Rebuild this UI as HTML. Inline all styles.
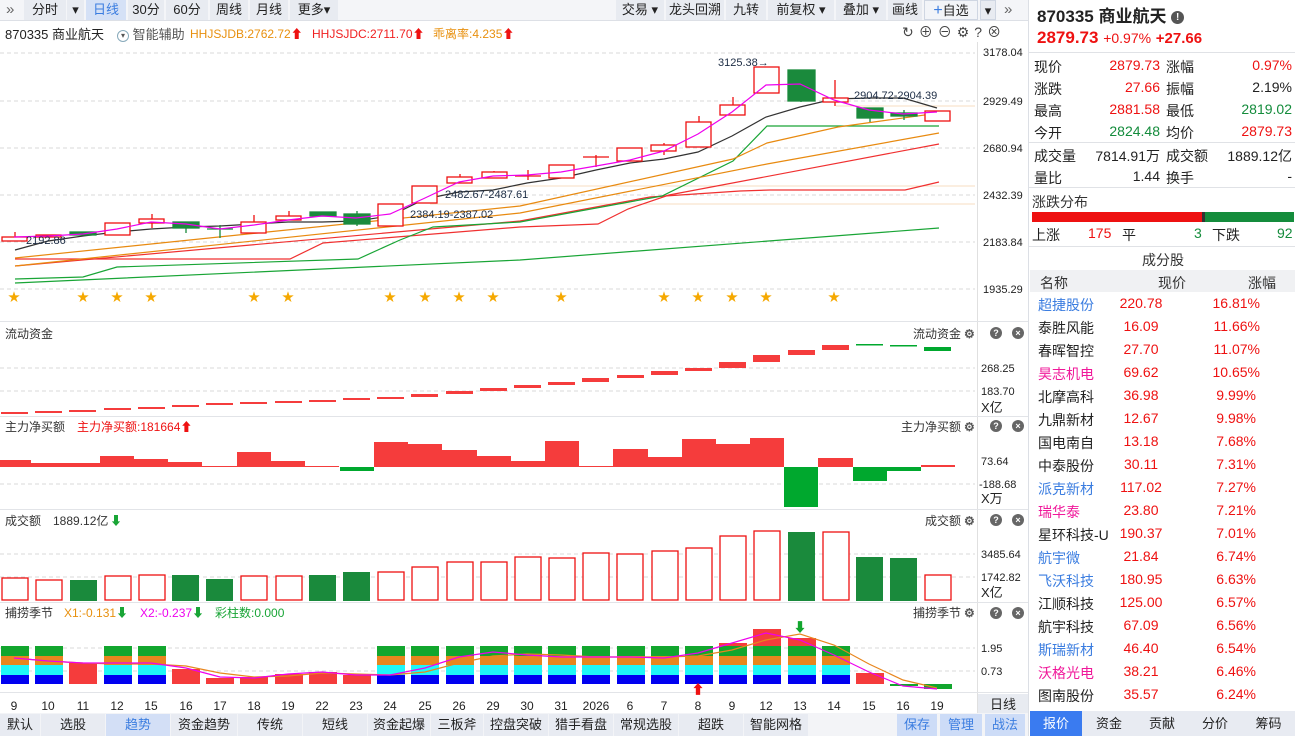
<!DOCTYPE html>
<html><head><meta charset="utf-8">
<style>
*{margin:0;padding:0;box-sizing:border-box}
body{width:1295px;height:736px;overflow:hidden;background:#fff;font-family:"Liberation Sans","Noto Sans CJK SC",sans-serif;font-size:13px;color:#222;position:relative}
.a{position:absolute;white-space:nowrap}
.tb{position:absolute;top:0;height:20px;background:#e8ebf1;line-height:20px;font-size:13px;text-align:center;color:#222}
.bt{position:absolute;top:714px;height:22px;background:#e8ebf2;line-height:22px;font-size:13px;text-align:center;color:#222}
.r{color:#ee1111}.g{color:#148c3c}
</style></head><body>
<div class="a" style="left:0;top:0;width:1028px;height:21px;background:#f4f5f8;border-bottom:1px solid #dde0e6"></div>
<div class="a" style="left:6px;top:1px;font-size:15px;color:#666">»</div>
<div class="tb" style="left:24px;width:42px">分时</div>
<div class="tb" style="left:67px;width:17px">▾</div>
<div class="tb" style="left:86px;width:40px;background:#d5e1f6;color:#3b7de0">日线</div>
<div class="tb" style="left:128px;width:36px">30分</div>
<div class="tb" style="left:166px;width:42px">60分</div>
<div class="tb" style="left:210px;width:38px">周线</div>
<div class="tb" style="left:250px;width:38px">月线</div>
<div class="tb" style="left:290px;width:48px">更多▾</div>
<div class="tb" style="left:616px;width:48px">交易 ▾</div>
<div class="tb" style="left:666px;width:58px">龙头回溯</div>
<div class="tb" style="left:726px;width:40px">九转</div>
<div class="tb" style="left:768px;width:66px">前复权 ▾</div>
<div class="tb" style="left:836px;width:50px">叠加 ▾</div>
<div class="tb" style="left:888px;width:34px">画线</div>
<div class="tb" style="left:924px;width:54px;background:#f2f4f8;border:1px solid #cfd6e2"><span style="color:#3b7de0;font-size:16px">+</span>自选</div>
<div class="tb" style="left:980px;width:16px;border:1px solid #cfd6e2">▾</div>
<div class="a" style="left:1004px;top:1px;font-size:15px;color:#666">»</div>

<div class="a" style="left:5px;top:24px;font-size:13px">870335 商业航天</div>
<div class="a" style="left:117px;top:24px;font-size:13px;color:#555"><span style="display:inline-block;width:12px;height:12px;border:1px solid #8ab;border-radius:50%;font-size:8px;line-height:10px;text-align:center;vertical-align:1px">▾</span> 智能辅助</div>
<div class="a" style="left:190px;top:25px;font-size:12px;color:#e8900e">HHJSJDB:2762.72<span class="r">⬆</span></div>
<div class="a" style="left:312px;top:25px;font-size:12px;color:#f02020">HHJSJDC:2711.70<span class="r">⬆</span></div>
<div class="a" style="left:433px;top:25px;font-size:12px;color:#e8900e">乖离率:4.235<span class="r">⬆</span></div>
<div class="a" style="left:902px;top:22px;font-size:14px;color:#444;letter-spacing:5px">↻⊕⊖⚙?⊗</div>

<svg class="a" style="left:0;top:0" width="1028" height="714" viewBox="0 0 1028 714" font-family="Liberation Sans, Noto Sans CJK SC, sans-serif">
<g stroke="#d8d8d8" stroke-dasharray="4,3" stroke-width="1">
<line x1="0" y1="53" x2="975" y2="53"/><line x1="0" y1="101" x2="975" y2="101"/><line x1="0" y1="148" x2="975" y2="148"/><line x1="0" y1="195" x2="975" y2="195"/><line x1="0" y1="242" x2="975" y2="242"/><line x1="0" y1="289" x2="975" y2="289"/>
<line x1="0" y1="368" x2="975" y2="368"/><line x1="0" y1="391" x2="975" y2="391"/>
<line x1="0" y1="484" x2="975" y2="484"/>
<line x1="0" y1="554" x2="975" y2="554"/><line x1="0" y1="577" x2="975" y2="577"/>
<line x1="0" y1="648" x2="975" y2="648"/><line x1="0" y1="671" x2="975" y2="671"/>
</g>
<line x1="977.5" y1="42" x2="977.5" y2="713" stroke="#e0e0e0"/>
<g stroke="#e2e4e8"><line x1="0" y1="321.5" x2="1028" y2="321.5"/><line x1="0" y1="416.5" x2="1028" y2="416.5"/><line x1="0" y1="509.5" x2="1028" y2="509.5"/><line x1="0" y1="602.5" x2="1028" y2="602.5"/><line x1="0" y1="692.5" x2="1028" y2="692.5"/></g>
<g stroke="#f7dcc0"><line x1="836" y1="106" x2="975" y2="106"/><line x1="430" y1="186" x2="975" y2="186"/><line x1="430" y1="204" x2="975" y2="204"/></g>
<g font-size="11" fill="#222">
<text x="983" y="56">3178.04</text><text x="983" y="105">2929.49</text><text x="983" y="152">2680.94</text><text x="983" y="199">2432.39</text><text x="983" y="246">2183.84</text><text x="983" y="293">1935.29</text>
<text x="981" y="372">268.25</text><text x="981" y="395">183.70</text><text x="981" y="412" font-size="13">X亿</text>
<text x="981" y="465">73.64</text><text x="979" y="488">-188.68</text><text x="981" y="503" font-size="13">X万</text>
<text x="981" y="558">3485.64</text><text x="981" y="581">1742.82</text><text x="981" y="597" font-size="13">X亿</text>
<text x="981" y="652">1.95</text><text x="981" y="675">0.73</text>
</g>
<g fill="none" stroke-width="1.2">
<polyline stroke="#19a536" points="15,283 520,260 939,228"/>
<polyline stroke="#f03030" points="15,259 290,259 323,243 520,227 598,224 628,209 669,195 939,144"/>
<polyline stroke="#f03030" points="15,266 520,221 650,197 740,191 770,190 905,190 939,182"/>
<polyline stroke="#19a536" points="15,279 83,277 117,267 358,259 400,240 433,227 520,222 662,196 733,161 767,126 939,126"/>
<polyline stroke="#e88a10" points="15,266 520,213 767,164 939,133"/>
<polyline stroke="#e88a10" points="15,258 520,206 733,159 767,143 838,127 939,113"/>
<polyline stroke="#333" points="15,250 48,241 83,236 117,232 151,229 186,227 220,226 254,224 288,222 322,222 356,221 390,216 425,199 459,192 493,190 527,183 561,178 596,170 630,163 664,159 698,152 732,136 766,117 800,107 834,99 869,98 903,98 937,108"/>
</g>
<g stroke="#ee1111" stroke-width="1.3" fill="#fff">
<line x1="15" y1="232" x2="15" y2="237"/><rect x="2" y="237" width="25" height="4"/>
<rect x="36" y="235" width="25" height="2"/>
<rect x="105" y="223" width="25" height="12"/>
<line x1="152" y1="214" x2="152" y2="228"/><rect x="139" y="219" width="25" height="4"/>
<line x1="254" y1="215" x2="254" y2="222"/><rect x="241" y="222" width="25" height="11"/>
<line x1="289" y1="211" x2="289" y2="216"/><rect x="276" y="216" width="25" height="4"/>
<rect x="378" y="204" width="25" height="22"/>
<rect x="412" y="186" width="25" height="17"/>
<line x1="460" y1="174" x2="460" y2="177"/><rect x="447" y="177" width="25" height="6"/>
<line x1="494" y1="171" x2="494" y2="172"/><rect x="482" y="172" width="25" height="6"/>
<line x1="528" y1="170" x2="528" y2="180"/><line x1="515" y1="176" x2="541" y2="176"/>
<rect x="549" y="165" width="25" height="13"/>
<line x1="596" y1="155" x2="596" y2="167"/><line x1="583" y1="157" x2="609" y2="157"/>
<rect x="617" y="148" width="25" height="13"/>
<line x1="664" y1="143" x2="664" y2="155"/><rect x="651" y="145" width="25" height="6"/>
<line x1="699" y1="116" x2="699" y2="122"/><rect x="686" y="122" width="25" height="25"/>
<line x1="733" y1="97" x2="733" y2="105"/><rect x="720" y="105" width="25" height="10"/>
<rect x="754" y="67" width="25" height="26"/>
<line x1="835" y1="80" x2="835" y2="106"/><rect x="823" y="98" width="25" height="4"/>
<rect x="925" y="111" width="25" height="10"/>
</g>
<g stroke="#1a8a3c" stroke-width="1.3" fill="#1a8a3c">
<rect x="70" y="232" width="26" height="3"/>
<line x1="186" y1="228" x2="186" y2="233"/><rect x="173" y="222" width="26" height="6"/>
<line x1="220" y1="225" x2="220" y2="238"/><line x1="207" y1="229" x2="233" y2="229"/>
<rect x="310" y="212" width="26" height="4"/>
<line x1="357" y1="211" x2="357" y2="226"/><rect x="344" y="214" width="26" height="10"/>
<line x1="801" y1="101" x2="801" y2="102"/><rect x="788" y="70" width="27" height="31"/>
<line x1="870" y1="118" x2="870" y2="122"/><rect x="857" y="108" width="26" height="10"/>
<line x1="904" y1="110" x2="904" y2="120"/><rect x="891" y="113" width="26" height="3"/>
</g>
<polyline fill="none" stroke="#ee00ee" stroke-width="1.2" points="14,237 48,236 83,234 117,229 151,222 186,224 220,229 254,225 288,220 322,216 356,218 390,214 425,198 459,182 493,176 527,175 561,172 596,166 630,160 664,151 698,134 732,112 766,85 800,84 834,100 869,110 903,114 937,112"/>
<g font-size="11" fill="#1c2c44">
<text x="26" y="244">2192.86</text><text x="410" y="218">2384.19-2387.02</text><text x="445" y="198">2482.67-2487.61</text>
<text x="718" y="66">3125.38→</text><text x="854" y="99">2904.72-2904.39</text>
</g>
<g fill="#f5a800" font-size="12" text-anchor="middle">
<text x="14" y="301">★</text><text x="83" y="301">★</text><text x="117" y="301">★</text><text x="151" y="301">★</text><text x="254" y="301">★</text><text x="288" y="301">★</text><text x="390" y="301">★</text><text x="425" y="301">★</text><text x="459" y="301">★</text><text x="493" y="301">★</text><text x="561" y="301">★</text><text x="664" y="301">★</text><text x="698" y="301">★</text><text x="732" y="301">★</text><text x="766" y="301">★</text><text x="834" y="301">★</text>
</g>
<g font-size="12" fill="#333">
<text x="5" y="338">流动资金</text><text x="913" y="338">流动资金</text>
<text x="5" y="431">主力净买额</text><text x="77" y="431" fill="#ee1111">主力净买额:181664⬆</text><text x="901" y="431">主力净买额</text>
<text x="5" y="525">成交额</text><text x="53" y="525">1889.12亿</text><text x="110" y="525" fill="#19a536">⬇</text><text x="925" y="525">成交额</text>
<text x="5" y="617">捕捞季节</text><text x="64" y="617" fill="#e8900e">X1:-0.131<tspan fill="#19a536">⬇</tspan></text><text x="140" y="617" fill="#ee00ee">X2:-0.237<tspan fill="#19a536">⬇</tspan></text><text x="215" y="617" fill="#19a536">彩柱数:0.000</text><text x="913" y="617">捕捞季节</text>
</g>
<g font-size="12" fill="#555" font-weight="bold">
<text x="964" y="338">⚙</text><text x="964" y="431">⚙</text><text x="964" y="525">⚙</text><text x="964" y="617">⚙</text>
</g>
<g fill="#666"><circle cx="996" cy="333" r="6"/><circle cx="1018" cy="333" r="6"/><circle cx="996" cy="426" r="6"/><circle cx="1018" cy="426" r="6"/><circle cx="996" cy="520" r="6"/><circle cx="1018" cy="520" r="6"/><circle cx="996" cy="613" r="6"/><circle cx="1018" cy="613" r="6"/></g>
<g fill="#fff" font-size="9" font-weight="bold" text-anchor="middle"><text x="996" y="336">?</text><text x="1018" y="336">×</text><text x="996" y="429">?</text><text x="1018" y="429">×</text><text x="996" y="523">?</text><text x="1018" y="523">×</text><text x="996" y="616">?</text><text x="1018" y="616">×</text></g>
<g fill="#f53c3c">
<rect x="1" y="412" width="27" height="2"/><rect x="35" y="411" width="27" height="2"/><rect x="69" y="410" width="27" height="2"/><rect x="104" y="408" width="27" height="2"/><rect x="138" y="407" width="27" height="2"/><rect x="172" y="405" width="27" height="2"/><rect x="206" y="403" width="27" height="2"/><rect x="240" y="402" width="27" height="2"/><rect x="275" y="401" width="27" height="2"/><rect x="309" y="400" width="27" height="2"/><rect x="343" y="398" width="27" height="2"/><rect x="377" y="397" width="27" height="2"/><rect x="411" y="394" width="27" height="3"/><rect x="446" y="391" width="27" height="3"/><rect x="480" y="388" width="27" height="3"/><rect x="514" y="385" width="27" height="3"/><rect x="548" y="382" width="27" height="3"/><rect x="582" y="378" width="27" height="4"/><rect x="617" y="375" width="27" height="3"/><rect x="651" y="371" width="27" height="4"/><rect x="685" y="368" width="27" height="3"/><rect x="719" y="362" width="27" height="6"/><rect x="753" y="355" width="27" height="7"/><rect x="788" y="350" width="27" height="5"/><rect x="822" y="345" width="27" height="5"/>
</g>
<g fill="#00a82e"><rect x="856" y="344" width="27" height="1.5"/><rect x="890" y="345" width="27" height="1.5"/><rect x="924" y="347" width="27" height="4"/></g>
<g fill="#f53c3c">
<rect x="0" y="460" width="31" height="7"/><rect x="31" y="463" width="34" height="4"/><rect x="65" y="463" width="35" height="4"/><rect x="100" y="456" width="34" height="11"/><rect x="134" y="459" width="34" height="8"/><rect x="168" y="462" width="34" height="5"/><rect x="202" y="466" width="35" height="1"/><rect x="237" y="452" width="34" height="15"/><rect x="271" y="461" width="34" height="6"/><rect x="305" y="466" width="34" height="1"/>
<rect x="374" y="442" width="34" height="25"/><rect x="408" y="444" width="34" height="23"/><rect x="442" y="450" width="35" height="17"/><rect x="477" y="456" width="34" height="11"/><rect x="511" y="461" width="34" height="6"/><rect x="545" y="441" width="34" height="26"/><rect x="579" y="466" width="34" height="1"/><rect x="613" y="449" width="35" height="18"/><rect x="648" y="457" width="34" height="10"/><rect x="682" y="439" width="34" height="28"/><rect x="716" y="444" width="34" height="23"/><rect x="750" y="438" width="34" height="29"/><rect x="818" y="458" width="35" height="9"/><rect x="921" y="465" width="34" height="2"/>
</g>
<g fill="#00a82e"><rect x="340" y="467" width="34" height="4"/><rect x="784" y="467" width="34" height="40"/><rect x="853" y="467" width="34" height="14"/><rect x="887" y="467" width="34" height="4"/></g>
<g stroke="#ee1111" stroke-width="1.3" fill="#fff">
<rect x="2" y="578" width="26" height="22"/><rect x="36" y="580" width="26" height="20"/><rect x="105" y="576" width="26" height="24"/><rect x="139" y="575" width="26" height="25"/><rect x="241" y="576" width="26" height="24"/><rect x="276" y="576" width="26" height="24"/><rect x="378" y="572" width="26" height="28"/><rect x="412" y="567" width="26" height="33"/><rect x="447" y="562" width="26" height="38"/><rect x="481" y="562" width="26" height="38"/><rect x="515" y="557" width="26" height="43"/><rect x="549" y="558" width="26" height="42"/><rect x="583" y="553" width="26" height="47"/><rect x="617" y="554" width="26" height="46"/><rect x="652" y="551" width="26" height="49"/><rect x="686" y="548" width="26" height="52"/><rect x="720" y="536" width="26" height="64"/><rect x="754" y="531" width="26" height="69"/><rect x="823" y="532" width="26" height="68"/><rect x="925" y="575" width="26" height="25"/>
</g>
<g fill="#1a8a3c"><rect x="70" y="580" width="27" height="21"/><rect x="172" y="575" width="27" height="26"/><rect x="206" y="579" width="27" height="22"/><rect x="309" y="575" width="27" height="26"/><rect x="343" y="572" width="27" height="29"/><rect x="788" y="532" width="27" height="69"/><rect x="856" y="557" width="27" height="44"/><rect x="890" y="558" width="27" height="43"/></g>
<defs><g id="st"><rect y="646" width="28" height="10" fill="#12a62e"/><rect y="656" width="28" height="9" fill="#e8861e"/><rect y="665" width="28" height="10" fill="#1ff7f7"/><rect y="675" width="28" height="9" fill="#0000f0"/></g></defs>
<use href="#st" x="1"/><use href="#st" x="35"/><use href="#st" x="104"/><use href="#st" x="138"/>
<use href="#st" x="377"/><use href="#st" x="411"/><use href="#st" x="446"/><use href="#st" x="480"/><use href="#st" x="514"/><use href="#st" x="548"/><use href="#st" x="582"/><use href="#st" x="617"/><use href="#st" x="651"/><use href="#st" x="685"/><use href="#st" x="719"/><use href="#st" x="753"/><use href="#st" x="788"/><use href="#st" x="822"/>
<g fill="#f53c3c"><rect x="69" y="663" width="28" height="21"/><rect x="172" y="669" width="28" height="15"/><rect x="206" y="678" width="28" height="6"/><rect x="240" y="677" width="28" height="7"/><rect x="275" y="674" width="28" height="10"/><rect x="309" y="672" width="28" height="12"/><rect x="343" y="675" width="28" height="9"/><rect x="719" y="643" width="28" height="3"/><rect x="753" y="629" width="28" height="17"/><rect x="788" y="638" width="28" height="8"/><rect x="856" y="673" width="28" height="11"/></g>
<g fill="#12a62e"><rect x="890" y="684" width="28" height="2"/><rect x="924" y="684" width="28" height="5"/></g>
<polyline fill="none" stroke="#e8861e" stroke-width="1.2" points="14,658 48,661 83,663 117,664 151,664 186,666 220,673 254,677 288,676 322,673 356,674 390,675 425,672 459,663 493,656 527,654 561,655 596,657 630,657 664,657 698,656 732,650 766,640 800,634 834,645 869,664 903,680 937,688"/>
<polyline fill="none" stroke="#ee00ee" stroke-width="1.2" points="14,658 48,661 83,663 117,663 151,663 186,668 220,677 254,678 288,674 322,672 356,675 390,675 425,668 459,657 493,652 527,655 561,657 596,657 630,657 664,658 698,653 732,643 766,633 800,640 834,655 869,672 903,686 937,689"/>
<text x="800" y="632" fill="#12a62e" font-size="13" text-anchor="middle">⬇</text>
<text x="698" y="694" fill="#ee1111" font-size="13" text-anchor="middle">⬆</text>
<g font-size="12" fill="#222" text-anchor="middle">
<text x="14" y="710">9</text><text x="48" y="710">10</text><text x="83" y="710">11</text><text x="117" y="710">12</text><text x="151" y="710">15</text><text x="186" y="710">16</text><text x="220" y="710">17</text><text x="254" y="710">18</text><text x="288" y="710">19</text><text x="322" y="710">22</text><text x="356" y="710">23</text><text x="390" y="710">24</text><text x="425" y="710">25</text><text x="459" y="710">26</text><text x="493" y="710">29</text><text x="527" y="710">30</text><text x="561" y="710">31</text><text x="596" y="710">2026</text><text x="630" y="710">6</text><text x="664" y="710">7</text><text x="698" y="710">8</text><text x="732" y="710">9</text><text x="766" y="710">12</text><text x="800" y="710">13</text><text x="834" y="710">14</text><text x="869" y="710">15</text><text x="903" y="710">16</text><text x="937" y="710">19</text>
</g>
<rect x="978" y="694" width="50" height="19" fill="#e8ebf1"/>
<text x="990" y="709" font-size="13" fill="#222">日线</text>
</svg>

<div class="a" style="left:0;top:713px;width:1028px;height:23px;background:#f3f4f7"></div>
<div class="bt" style="left:0;width:40px">默认</div>
<div class="bt" style="left:41px;width:64px">选股</div>
<div class="bt" style="left:106px;width:64px;background:#d3dff6;color:#3b7de0">趋势</div>
<div class="bt" style="left:171px;width:66px">资金趋势</div>
<div class="bt" style="left:238px;width:64px">传统</div>
<div class="bt" style="left:303px;width:64px">短线</div>
<div class="bt" style="left:368px;width:62px">资金起爆</div>
<div class="bt" style="left:431px;width:52px">三板斧</div>
<div class="bt" style="left:484px;width:64px">控盘突破</div>
<div class="bt" style="left:549px;width:64px">猎手看盘</div>
<div class="bt" style="left:614px;width:64px">常规选股</div>
<div class="bt" style="left:679px;width:64px">超跌</div>
<div class="bt" style="left:744px;width:64px">智能网格</div>
<div class="bt" style="left:897px;width:40px;background:#cddcf7;color:#3b7de0">保存</div>
<div class="bt" style="left:940px;width:42px;background:#cddcf7;color:#3b7de0">管理</div>
<div class="bt" style="left:985px;width:40px;background:#cddcf7;color:#3b7de0">战法</div>

<div class="a" style="left:1028px;top:0;width:1px;height:736px;background:#dcdfe5"></div>
<div class="a" style="left:1037px;top:2px;font-size:17px;font-weight:bold;color:#222">870335 商业航天 <span style="display:inline-block;width:13px;height:13px;border-radius:50%;background:#555;color:#fff;font-size:10px;line-height:13px;text-align:center;vertical-align:2px">!</span></div>
<div class="a r" style="left:1037px;top:28px;font-size:17px;font-weight:bold">2879.73 <span style="font-size:14px;font-weight:normal">+0.97%</span> <span style="font-size:15px">+27.66</span></div>
<div class="a" style="left:1029px;top:52px;width:266px;height:1px;background:#e0e2e6"></div>
<div style="font-size:14px">
<div class="a" style="left:1034px;top:57px">现价</div><div class="a r" style="left:1090px;top:57px;width:70px;text-align:right">2879.73</div><div class="a" style="left:1166px;top:57px">涨幅</div><div class="a r" style="left:1220px;top:57px;width:72px;text-align:right">0.97%</div>
<div class="a" style="left:1034px;top:79px">涨跌</div><div class="a r" style="left:1090px;top:79px;width:70px;text-align:right">27.66</div><div class="a" style="left:1166px;top:79px">振幅</div><div class="a" style="left:1220px;top:79px;width:72px;text-align:right">2.19%</div>
<div class="a" style="left:1034px;top:101px">最高</div><div class="a r" style="left:1090px;top:101px;width:70px;text-align:right">2881.58</div><div class="a" style="left:1166px;top:101px">最低</div><div class="a g" style="left:1220px;top:101px;width:72px;text-align:right">2819.02</div>
<div class="a" style="left:1034px;top:123px">今开</div><div class="a g" style="left:1090px;top:123px;width:70px;text-align:right">2824.48</div><div class="a" style="left:1166px;top:123px">均价</div><div class="a r" style="left:1220px;top:123px;width:72px;text-align:right">2879.73</div>
<div class="a" style="left:1029px;top:142px;width:266px;height:1px;background:#e0e2e6"></div>
<div class="a" style="left:1034px;top:146px">成交量</div><div class="a" style="left:1090px;top:146px;width:70px;text-align:right">7814.91万</div><div class="a" style="left:1166px;top:146px">成交额</div><div class="a" style="left:1220px;top:146px;width:72px;text-align:right">1889.12亿</div>
<div class="a" style="left:1034px;top:168px">量比</div><div class="a" style="left:1090px;top:168px;width:70px;text-align:right">1.44</div><div class="a" style="left:1166px;top:168px">换手</div><div class="a" style="left:1220px;top:168px;width:72px;text-align:right">-</div>
<div class="a" style="left:1029px;top:187px;width:266px;height:1px;background:#e0e2e6"></div>
<div class="a" style="left:1032px;top:192px;color:#333">涨跌分布</div>
<div class="a" style="left:1032px;top:212px;width:170px;height:10px;background:#ee1111"></div>
<div class="a" style="left:1202px;top:212px;width:3px;height:10px;background:#333"></div>
<div class="a" style="left:1205px;top:212px;width:89px;height:10px;background:#148c3c"></div>
<div class="a" style="left:1032px;top:225px">上涨</div><div class="a r" style="left:1088px;top:225px">175</div><div class="a" style="left:1122px;top:225px">平</div><div class="a g" style="left:1194px;top:225px">3</div><div class="a" style="left:1212px;top:225px">下跌</div><div class="a g" style="left:1277px;top:225px">92</div>
<div class="a" style="left:1029px;top:246px;width:266px;height:1px;background:#e0e2e6"></div>
<div class="a" style="left:1142px;top:250px;color:#333">成分股</div>
<div class="a" style="left:1030px;top:270px;width:265px;height:22px;background:#f0f1f3"></div>
<div class="a" style="left:1040px;top:273px;color:#333">名称</div><div class="a" style="left:1158px;top:273px;color:#333">现价</div><div class="a" style="left:1248px;top:273px;color:#333">涨幅</div>
</div>
<div style="font-size:14px">
<div class="a" style="left:1038px;top:295px;color:#3b7de0">超捷股份</div><div class="a r" style="left:1100px;top:295px;width:82px;text-align:center">220.78</div><div class="a r" style="left:1200px;top:295px;width:60px;text-align:right">16.81%</div>
<div class="a" style="left:1038px;top:318px">泰胜风能</div><div class="a r" style="left:1100px;top:318px;width:82px;text-align:center">16.09</div><div class="a r" style="left:1200px;top:318px;width:60px;text-align:right">11.66%</div>
<div class="a" style="left:1038px;top:341px">春晖智控</div><div class="a r" style="left:1100px;top:341px;width:82px;text-align:center">27.70</div><div class="a r" style="left:1200px;top:341px;width:60px;text-align:right">11.07%</div>
<div class="a" style="left:1038px;top:364px;color:#f0189a">昊志机电</div><div class="a r" style="left:1100px;top:364px;width:82px;text-align:center">69.62</div><div class="a r" style="left:1200px;top:364px;width:60px;text-align:right">10.65%</div>
<div class="a" style="left:1038px;top:387px">北摩高科</div><div class="a r" style="left:1100px;top:387px;width:82px;text-align:center">36.98</div><div class="a r" style="left:1200px;top:387px;width:56px;text-align:right">9.99%</div>
<div class="a" style="left:1038px;top:410px">九鼎新材</div><div class="a r" style="left:1100px;top:410px;width:82px;text-align:center">12.67</div><div class="a r" style="left:1200px;top:410px;width:56px;text-align:right">9.98%</div>
<div class="a" style="left:1038px;top:433px">国电南自</div><div class="a r" style="left:1100px;top:433px;width:82px;text-align:center">13.18</div><div class="a r" style="left:1200px;top:433px;width:56px;text-align:right">7.68%</div>
<div class="a" style="left:1038px;top:456px">中泰股份</div><div class="a r" style="left:1100px;top:456px;width:82px;text-align:center">30.11</div><div class="a r" style="left:1200px;top:456px;width:56px;text-align:right">7.31%</div>
<div class="a" style="left:1038px;top:479px;color:#3b7de0">派克新材</div><div class="a r" style="left:1100px;top:479px;width:82px;text-align:center">117.02</div><div class="a r" style="left:1200px;top:479px;width:56px;text-align:right">7.27%</div>
<div class="a" style="left:1038px;top:502px;color:#f0189a">瑞华泰</div><div class="a r" style="left:1100px;top:502px;width:82px;text-align:center">23.80</div><div class="a r" style="left:1200px;top:502px;width:56px;text-align:right">7.21%</div>
<div class="a" style="left:1038px;top:525px">星环科技-U</div><div class="a r" style="left:1100px;top:525px;width:82px;text-align:center">190.37</div><div class="a r" style="left:1200px;top:525px;width:56px;text-align:right">7.01%</div>
<div class="a" style="left:1038px;top:548px;color:#3b7de0">航宇微</div><div class="a r" style="left:1100px;top:548px;width:82px;text-align:center">21.84</div><div class="a r" style="left:1200px;top:548px;width:56px;text-align:right">6.74%</div>
<div class="a" style="left:1038px;top:571px;color:#3b7de0">飞沃科技</div><div class="a r" style="left:1100px;top:571px;width:82px;text-align:center">180.95</div><div class="a r" style="left:1200px;top:571px;width:56px;text-align:right">6.63%</div>
<div class="a" style="left:1038px;top:594px">江顺科技</div><div class="a r" style="left:1100px;top:594px;width:82px;text-align:center">125.00</div><div class="a r" style="left:1200px;top:594px;width:56px;text-align:right">6.57%</div>
<div class="a" style="left:1038px;top:617px">航宇科技</div><div class="a r" style="left:1100px;top:617px;width:82px;text-align:center">67.09</div><div class="a r" style="left:1200px;top:617px;width:56px;text-align:right">6.56%</div>
<div class="a" style="left:1038px;top:640px;color:#3b7de0">斯瑞新材</div><div class="a r" style="left:1100px;top:640px;width:82px;text-align:center">46.40</div><div class="a r" style="left:1200px;top:640px;width:56px;text-align:right">6.54%</div>
<div class="a" style="left:1038px;top:663px;color:#f0189a">沃格光电</div><div class="a r" style="left:1100px;top:663px;width:82px;text-align:center">38.21</div><div class="a r" style="left:1200px;top:663px;width:56px;text-align:right">6.46%</div>
<div class="a" style="left:1038px;top:686px">图南股份</div><div class="a r" style="left:1100px;top:686px;width:82px;text-align:center">35.57</div><div class="a r" style="left:1200px;top:686px;width:56px;text-align:right">6.24%</div>
</div>
<div class="a" style="left:1030px;top:711px;width:265px;height:25px;background:#e8ebf2"></div>
<div class="bt" style="top:711px;height:25px;line-height:25px;left:1030px;width:52px;background:#3a7bf0;color:#fff">报价</div>
<div class="bt" style="top:711px;height:25px;line-height:25px;left:1083px;width:52px">资金</div>
<div class="bt" style="top:711px;height:25px;line-height:25px;left:1136px;width:52px">贡献</div>
<div class="bt" style="top:711px;height:25px;line-height:25px;left:1189px;width:52px">分价</div>
<div class="bt" style="top:711px;height:25px;line-height:25px;left:1242px;width:53px">筹码</div>
</body></html>
